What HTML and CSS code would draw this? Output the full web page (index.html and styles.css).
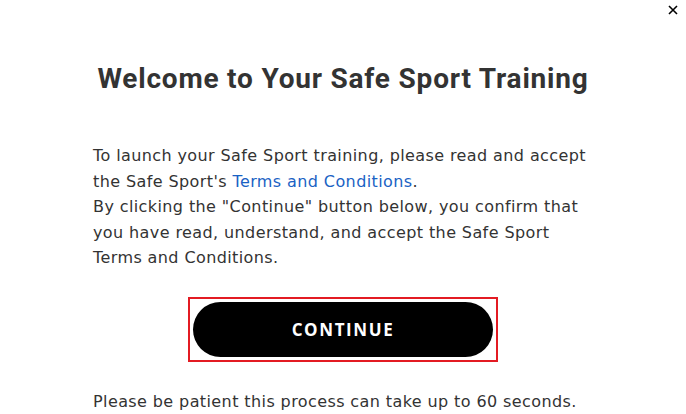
FILE: index.html
```html
<!DOCTYPE html>
<html lang="en">

<head>
  <meta charset="UTF-8">
  <meta name="viewport" content="width=device-width, initial-scale=1.0">
  <title>Safe Sport Training</title>
  <link rel="stylesheet" href="styles.css">
</head>

<body>
  <div class="modal">
    <button class="close" aria-label="Close">
      <svg width="10" height="10" viewBox="0 0 10 10">
        <path d="M1 1 L9 9 M9 1 L1 9" stroke="#000" stroke-width="1.6" fill="none"/>
      </svg>
    </button>

    <div class="content">
      <h1 class="title">Welcome to Your Safe Sport Training</h1>

      <p class="intro">
        To launch your Safe Sport training, please read and accept
        the Safe Sport's <a href="#">Terms and Conditions</a>.<br>
        By clicking the "Continue" button below, you confirm that
        you have read, understand, and accept the Safe Sport
        Terms and Conditions.
      </p>

      <div class="action">
        <div class="highlight">
          <button class="continue">CONTINUE</button>
        </div>
      </div>

      <p class="note">Please be patient this process can take up to 60 seconds.</p>
    </div>
  </div>
</body>

</html>
```

FILE: styles.css
```css
body {
  margin: 0;
  background: #fff;
  font-family: "DejaVu Sans", "Liberation Sans", sans-serif;
  color: #333;
}

.modal {
  position: relative;
  width: 686px;
  height: 414px;
  overflow: hidden;
}

.close {
  position: absolute;
  top: 5px;
  right: 8px;
  background: none;
  border: none;
  padding: 0;
  cursor: pointer;
  line-height: 0;
}

.content {
  width: 500px;
  margin: 0 auto;
  padding-top: 62px;
}

.title {
  margin: 0 0 48px;
  text-align: center;
  font-family: Roboto, "Liberation Sans", sans-serif;
  font-size: 28px;
  font-weight: 700;
  letter-spacing: 0.8px;
  color: #333;
}

.intro {
  margin: 0;
  font-size: 16px;
  line-height: 25.5px;
  letter-spacing: 0.4px;
}

.intro a {
  color: #1a62c4;
  text-decoration: none;
}

.action {
  display: flex;
  justify-content: center;
  margin-top: 26px;
}

.highlight {
  border: 2px solid #e31b23;
  padding: 3px;
}

.continue {
  display: block;
  width: 300px;
  height: 55px;
  border: none;
  border-radius: 28px;
  background: #000;
  color: #fff;
  font-family: "Open Sans", "Liberation Sans", sans-serif;
  font-size: 17px;
  font-weight: 700;
  letter-spacing: 1.6px;
  cursor: pointer;
}

.note {
  margin: 30px 0 0;
  font-size: 16px;
  letter-spacing: 0.4px;
}
```
